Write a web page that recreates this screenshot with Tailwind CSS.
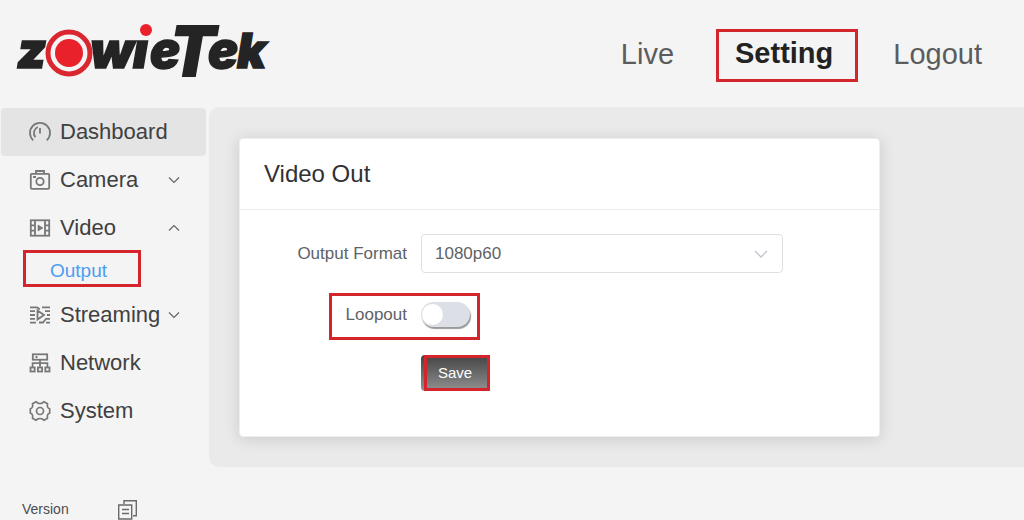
<!DOCTYPE html>
<html lang="en">
<head>
<meta charset="utf-8">
<meta name="viewport" content="width=device-width, initial-scale=1">
<title>ZowieTek - Video Out</title>
<script src="https://cdn.jsdelivr.net/npm/@tailwindcss/browser@4"></script>
</head>
<body class="h-screen overflow-hidden bg-[#f4f4f4] font-['Liberation_Sans',Arial,sans-serif] text-[#404244]">
<div class="flex h-full flex-col">
  <header class="flex h-[107px] shrink-0 items-start justify-between pr-[42px]">
    <a href="#" aria-label="ZowieTek home" class="pl-4 pt-4">
      <svg width="256" height="66" viewBox="16 16 256 66" fill="#242424" font-style="italic" font-weight="900">
        <g font-family="Inter, sans-serif" font-size="50" stroke="#242424" stroke-width="1.5">
          <text x="17" y="68">z</text>
          <text x="90" y="68">w</text>
          <text x="133" y="68">ı</text>
          <text x="150" y="68">e</text>
          <text x="208" y="68">e</text>
          <text x="237" y="68" font-size="48">k</text>
        </g>
        <text x="171" y="76" font-family="Roboto, sans-serif" font-size="71" stroke="#242424" stroke-width="2">T</text>
        <circle cx="69" cy="53" r="21" fill="#f4f4f4" stroke="#d9262f" stroke-width="5"/>
        <circle cx="69" cy="53" r="14" fill="#e9212b"/>
        <circle cx="146" cy="30" r="6" fill="#e9212b"/>
      </svg>
    </a>
    <nav class="flex items-center pt-[29px] text-[29px] leading-[46px] text-[#5c5c5c]">
      <a href="#" class="pb-1">Live</a>
      <a href="#" aria-current="page" class="ml-[42px] mr-[35px] border-3 border-[#d4252d] pb-1 pl-4 pr-[22px] text-[29px] font-bold leading-[43px] text-[#222]">Setting</a>
      <a href="#" class="pb-1">Logout</a>
    </nav>
  </header>

  <div class="flex min-h-0 flex-1">
    <aside class="flex w-[209px] shrink-0 flex-col">
      <nav class="flex flex-col pt-px text-[22px] leading-[48px] text-[#404040]">
        <a href="#" class="ml-px mr-[3px] flex h-12 items-center gap-2 rounded bg-[#e4e4e4] pl-[27px]">
          <svg class="size-6" viewBox="0 0 24 24" fill="none" stroke="#787878" stroke-width="1.8"><path d="M5.2 20.3A10 10 0 1 1 18.8 20.3M7.4 17.2A6.6 6.6 0 0 1 9.8 7M12 8v5.500"/></svg>
          Dashboard</a>
        <button type="button" aria-expanded="false" class="flex h-12 items-center pl-7 text-left">
          <svg class="mr-2 size-6" viewBox="0 0 24 24" fill="none" stroke="#787878" stroke-width="1.8"><rect x="2.8" y="5.8" width="18.4" height="15" rx="1"/><path d="M8 5.500V3h8v2.500M5 9h3"/><circle cx="12" cy="13.500" r="3.700"/></svg>
          <span class="w-[108px]">Camera</span>
          <svg class="size-3" viewBox="0 0 12 12" fill="none" stroke="#606266" stroke-width="1.1"><path d="M1 3.500 6 8.500 11 3.500"/></svg>
        </button>
        <button type="button" aria-expanded="true" class="flex h-12 items-center pl-7 text-left">
          <svg class="mr-2 size-6" viewBox="0 0 24 24" fill="none" stroke="#787878" stroke-width="1.8"><rect x="2.8" y="4.3" width="18.4" height="15.4"/><path d="M7 4v16M17 4v16M3 9.300h4M3 14.700h4M17 9.300h4M17 14.700h4"/><path d="M10 9v6l5-3z" fill="#787878" stroke-width=".6"/></svg>
          <span class="w-[108px]">Video</span>
          <svg class="size-3" viewBox="0 0 12 12" fill="none" stroke="#606266" stroke-width="1.1"><path d="M1 8.500 6 3.500 11 8.500"/></svg>
        </button>
        <a href="#" class="mb-1 ml-[23px] mr-[68px] mt-[-2px] border-3 border-[#d4252d] pl-6 pt-1 text-[19px] leading-[27px] text-[#4c9df2]">Output</a>
        <button type="button" aria-expanded="false" class="flex h-12 items-center pl-7 text-left">
          <svg class="mr-2 size-6" viewBox="0 0 24 24" fill="none" stroke="#787878" stroke-width="1.8"><path d="M2 4.300h7l2 1.500h1M14 4.300h8M2 8.200h5M17 8.200h5M2 12h5M19 12h3M2 15.800h5M22 15.800h-4l-3 3.700h-4M2 19.600h6M18 19.600h4M9.500 7.500v9l6.500-4.500z"/></svg>
          <span class="w-[108px]">Streaming</span>
          <svg class="size-3" viewBox="0 0 12 12" fill="none" stroke="#606266" stroke-width="1.1"><path d="M1 3.500 6 8.500 11 3.500"/></svg>
        </button>
        <a href="#" class="flex h-12 items-center gap-2 pl-7">
          <svg class="size-6" viewBox="0 0 24 24" fill="none" stroke="#787878" stroke-width="1.8"><rect x="4.8" y="3.3" width="14.4" height="5.4"/><path d="M7.500 6h2M12 9v7M4.600 16v-3.800h14.800V16"/><rect x="2.5" y="16.5" width="4.2" height="4"/><rect x="9.9" y="16.5" width="4.2" height="4"/><rect x="17.3" y="16.5" width="4.2" height="4"/></svg>
          Network</a>
        <a href="#" class="flex h-12 items-center gap-2 pl-7">
          <svg class="size-6" viewBox="0 0 24 24" fill="none" stroke="#787878" stroke-width="1.7" stroke-linejoin="round"><path d="M8 2.700 9.800 4.100q2.200.8 4.400 0L16 2.700l3.500 2 -.2 2.300q.2 2 2 2.700l.4.300v4l-.4.300q-1.800.7-2 2.700l.2 2.300-3.500 2-1.800-1.400q-2.200-.8-4.400 0L8 21.300l-3.500-2 .2-2.300q-.2-2-2-2.700l-.4-.3v-4l.4-.3q1.800-.7 2-2.700l-.2-2.300z"/><circle cx="12" cy="12" r="3.500"/></svg>
          System</a>
      </nav>
      <div class="mt-16 flex items-start text-[14px] leading-[20px] text-[#4c4c4c]">
        <span class="w-[117px] pl-[22px]">Version</span>
        <button type="button" aria-label="Copy version"><svg class="block" width="22" height="22" viewBox="0 0 22 22" fill="none" stroke="#6a6a6a" stroke-width="1.400"><path d="M7 5V1.700h12.300v15H16M1.700 6h13v14h-13zM5 10.500h7M5 14.500h7"/></svg></button>
      </div>
    </aside>

    <main class="min-w-0 flex-1 self-start rounded-l-[10px] bg-[#eaeaea] pb-[30px] pl-[30px] pt-[31px]">
      <section class="w-full max-w-[641px] rounded border border-[#ebeef5] bg-white shadow-[0_2px_16px_rgba(0,0,0,0.14)]">
        <h1 class="border-b border-[#ebebeb] px-6 text-[24px] leading-[70px] text-[#303133]">Video Out</h1>
        <form class="flex flex-col pb-[45px] pt-6 text-[17px] text-[#606266]">
          <div class="flex items-center">
            <label for="format" class="w-[181px] pr-[14px] text-right">Output Format</label>
            <div class="relative w-[362px]">
              <select id="format" class="block h-[39px] w-full appearance-none rounded border border-[#dfdfdf] bg-white pl-[13px] text-[17px]"><option>1080p60</option></select>
              <svg class="pointer-events-none absolute right-[14px] top-3 size-4" viewBox="0 0 16 16" fill="none" stroke="#c0c4cc" stroke-width="1.300"><path d="M2 5 8 11 14 5"/></svg>
            </div>
          </div>
          <div class="ml-[89px] mt-5 flex h-[47px] w-[151px] items-center border-3 border-[#d4252d]">
            <label for="loopout" class="w-[89px] pb-1 pr-[14px] text-right">Loopout</label>
            <input id="loopout" type="checkbox" role="switch" class="mb-1 h-[25px] w-[49px] appearance-none rounded-full bg-[#dcdfe6] shadow-[1px_2px_1px_#999] before:ml-px before:mt-[2px] before:block before:size-[21px] before:rounded-full before:bg-white checked:bg-[#409eff] checked:before:ml-[27px]">
          </div>
          <button type="button" class="ml-[181px] mt-[15px] flex w-[69px] rounded bg-linear-to-b from-[#444] to-[#929292] pl-[3px] text-[15px] text-white"><span class="w-full border-3 border-[#d4252d] pr-1 leading-[30px]">Save</span></button>
        </form>
      </section>
    </main>
  </div>
</div>
</body>
</html>
